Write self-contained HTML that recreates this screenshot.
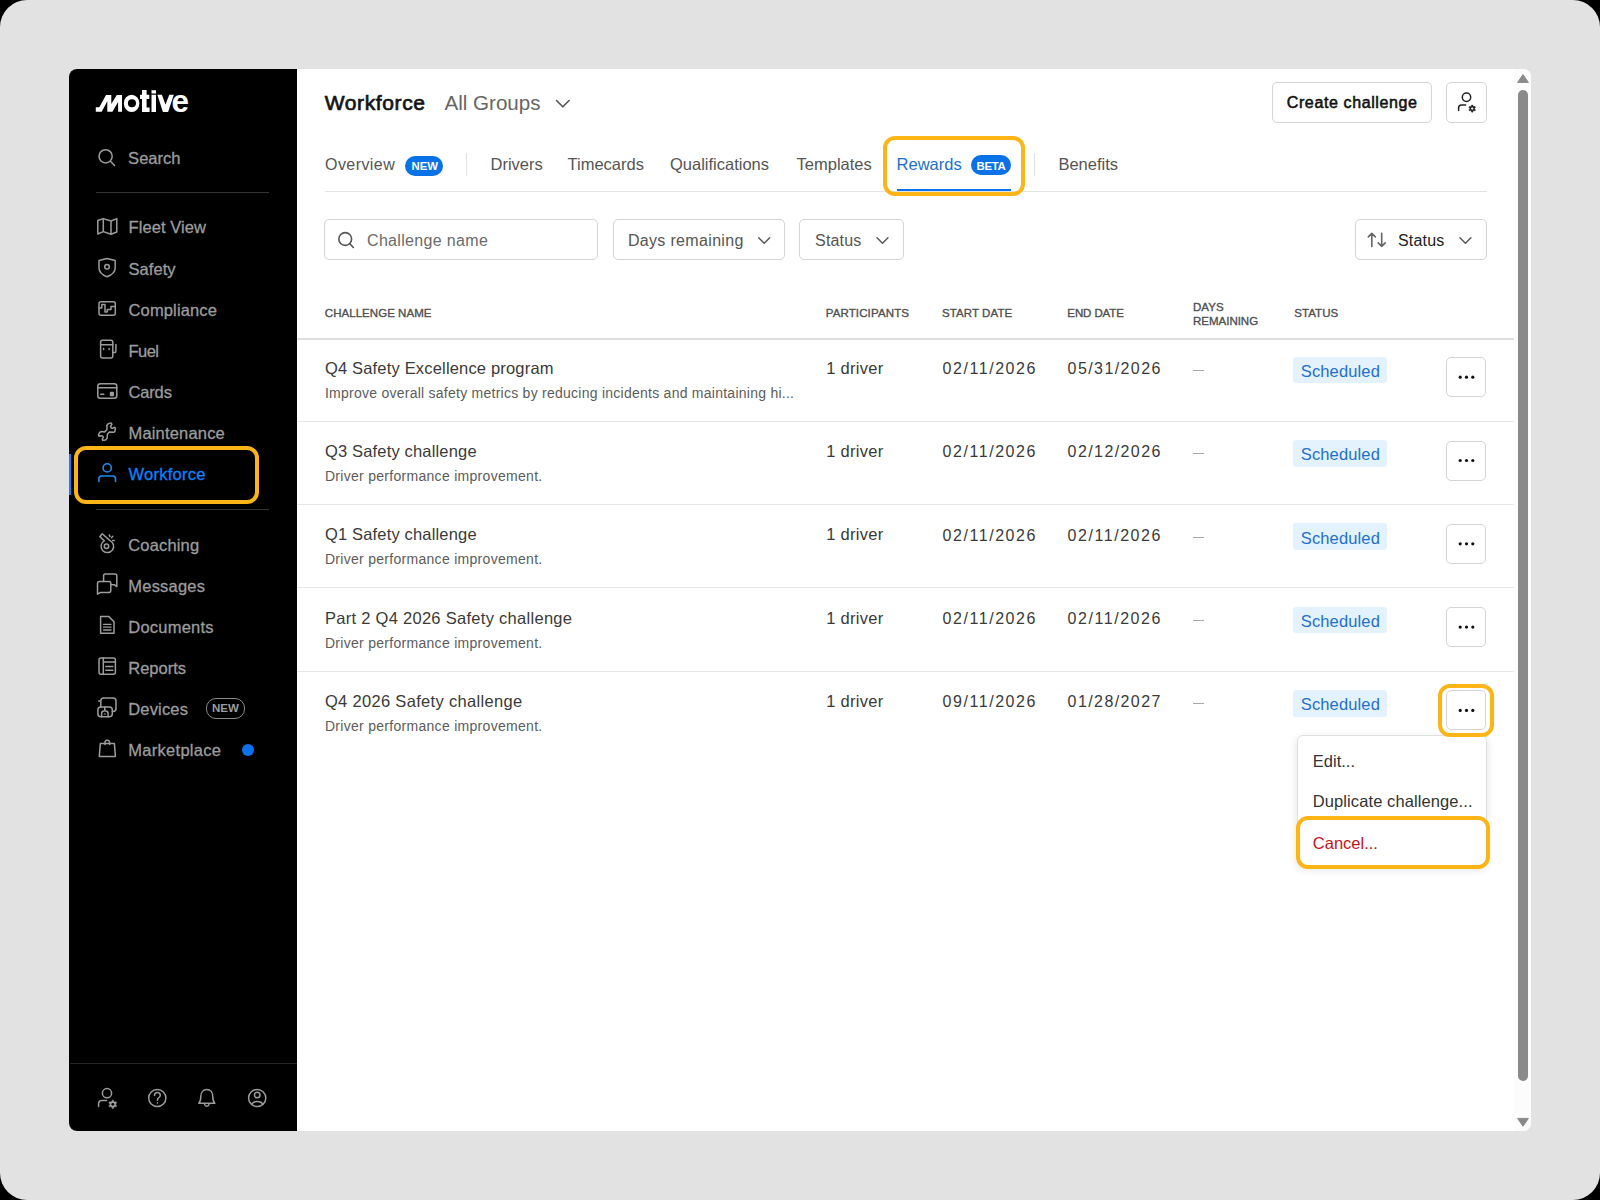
<!DOCTYPE html>
<html><head><meta charset="utf-8">
<style>
*{margin:0;padding:0;box-sizing:border-box}
html,body{width:1600px;height:1200px;overflow:hidden;background:#000;font-family:"Liberation Sans",sans-serif}
.a{position:absolute;white-space:nowrap;line-height:1}
.b{position:absolute}
.ic{position:absolute;overflow:visible}
</style></head><body>

<div class="b" style="left:0.00px;top:0.00px;width:1600.00px;height:1200.00px;background:#e2e2e2;border-radius:27px"></div>
<div class="b" style="left:69.00px;top:69.00px;width:1462.00px;height:1062.00px;background:#fff;border-radius:8px"></div>
<div class="b" style="left:69.00px;top:69.00px;width:228.00px;height:1062.00px;background:#000;border-radius:8px 0 0 8px"></div>
<div class="b" style="left:1514.00px;top:69.00px;width:17.00px;height:1062.00px;background:#fcfcfc;border-radius:0 8px 8px 0"></div>
<svg class="ic" style="left:0;top:0" width="1600" height="200" viewBox="0 0 1600 200"><path fill="#fff" d="M95.8 111.8 L95.8 107.3 L99.3 107.3 L106 95 L111.3 95 L111.3 104 L116.8 95 L122 95 L122 111.8 L118.1 111.8 L118.1 102 L112.4 111.8 L107.3 111.8 L107.3 101.2 L101.7 111.8 Z"/><path fill="#fff" fill-rule="evenodd" d="M131.6 94.8 A7.8 8.55 0 1 1 131.6 111.9 A7.8 8.55 0 1 1 131.6 94.8 Z M131.95 99.3 A4.05 3.95 0 1 0 131.95 107.2 A4.05 3.95 0 1 0 131.95 99.3 Z"/><path fill="#fff" d="M142 90 H146.6 V94.8 H149.3 V99 H146.6 V107.4 H149.6 V111.9 H142 V99 H140 V94.8 H142 Z"/><path fill="#fff" d="M151.5 94.8 H156 V111.9 H151.5 Z M151.5 90.2 H156 V93.5 H151.5 Z"/><path fill="#fff" d="M157.4 94.8 H161.9 L165.5 104.5 L169.3 94.8 H173.8 L168.1 111.9 H162.9 Z"/><text x="171.4" y="111.5" font-family="Liberation Sans" font-weight="700" font-size="31.5" fill="#fff">e</text></svg>
<svg class="ic" style="left:0px;top:0px" width="300" height="1200" viewBox="0 0 300 1200"><g fill="none" stroke="#9c9c9c" stroke-width="1.5" stroke-linecap="round" stroke-linejoin="round"><circle cx="105.6" cy="156.3" r="6.6"/><path d="M110.4 161.2 L114.6 165.5"/></g></svg>
<div class="a" style="left:128.10px;top:149.83px;font-size:16.5px;color:#9c9c9c;font-weight:400;letter-spacing:0.026px;-webkit-text-stroke:0.3px currentColor;">Search</div>
<div class="b" style="left:96.00px;top:192.00px;width:173.00px;height:1.00px;background:#333"></div>
<div class="a" style="left:128.50px;top:219.43px;font-size:16.5px;color:#9c9c9c;font-weight:400;letter-spacing:0.070px;-webkit-text-stroke:0.3px currentColor;">Fleet View</div>
<div class="a" style="left:128.50px;top:260.53px;font-size:16.5px;color:#9c9c9c;font-weight:400;letter-spacing:0.064px;-webkit-text-stroke:0.3px currentColor;">Safety</div>
<div class="a" style="left:128.50px;top:301.63px;font-size:16.5px;color:#9c9c9c;font-weight:400;letter-spacing:0.142px;-webkit-text-stroke:0.3px currentColor;">Compliance</div>
<div class="a" style="left:128.50px;top:342.73px;font-size:16.5px;color:#9c9c9c;font-weight:400;letter-spacing:-0.531px;-webkit-text-stroke:0.3px currentColor;">Fuel</div>
<div class="a" style="left:128.50px;top:383.83px;font-size:16.5px;color:#9c9c9c;font-weight:400;letter-spacing:-0.155px;-webkit-text-stroke:0.3px currentColor;">Cards</div>
<div class="a" style="left:128.50px;top:424.93px;font-size:16.5px;color:#9c9c9c;font-weight:400;letter-spacing:0.177px;-webkit-text-stroke:0.3px currentColor;">Maintenance</div>
<div class="a" style="left:128.50px;top:466.03px;font-size:16.5px;color:#0a84ff;font-weight:400;letter-spacing:0.265px;-webkit-text-stroke:0.3px currentColor;">Workforce</div>
<div class="a" style="left:128.30px;top:537.33px;font-size:16.5px;color:#9c9c9c;font-weight:400;letter-spacing:0.155px;-webkit-text-stroke:0.3px currentColor;">Coaching</div>
<div class="a" style="left:128.30px;top:578.33px;font-size:16.5px;color:#9c9c9c;font-weight:400;letter-spacing:0.213px;-webkit-text-stroke:0.3px currentColor;">Messages</div>
<div class="a" style="left:128.30px;top:619.33px;font-size:16.5px;color:#9c9c9c;font-weight:400;letter-spacing:0.218px;-webkit-text-stroke:0.3px currentColor;">Documents</div>
<div class="a" style="left:128.30px;top:660.33px;font-size:16.5px;color:#9c9c9c;font-weight:400;letter-spacing:-0.011px;-webkit-text-stroke:0.3px currentColor;">Reports</div>
<div class="a" style="left:128.30px;top:701.33px;font-size:16.5px;color:#9c9c9c;font-weight:400;letter-spacing:0.152px;-webkit-text-stroke:0.3px currentColor;">Devices</div>
<div class="a" style="left:128.30px;top:742.33px;font-size:16.5px;color:#9c9c9c;font-weight:400;letter-spacing:0.282px;-webkit-text-stroke:0.3px currentColor;">Marketplace</div>
<div class="b" style="left:96.00px;top:509.00px;width:173.00px;height:1.00px;background:#333"></div>
<div class="b" style="left:70.00px;top:1062.60px;width:227.00px;height:1.40px;background:#262626"></div>
<svg class="ic" style="left:0px;top:0px" width="300" height="1200" viewBox="0 0 300 1200"><g fill="none" stroke="#9c9c9c" stroke-width="1.5" stroke-linecap="round" stroke-linejoin="round"><path d="M97.8 220.5 L103.3 218.6 L111 221 L116.8 218.6 L116.8 232 L111 234.2 L103.3 231.6 L97.8 234 Z M103.3 218.6 V231.6 M111 221 V234.2"/><path d="M99 260.5 L107 258.6 L115.2 260.5 L115.2 268 C115.2 272 111.5 275 107 276.8 C102.5 275 99 272 99 268 Z"/><circle cx="107" cy="266.8" r="2.3"/><rect x="99" y="301.8" width="16.3" height="13.4" rx="2"/><path d="M99 308 H101.8 V304.6 H105 V312 H107.2 V309.5 H111 V306.5 H115.2"/><rect x="100.6" y="340.3" width="12.2" height="17.7" rx="2"/><path d="M100.6 344.8 H112.8 M112.8 352.5 L114.8 352.5 C115.6 352.5 115.9 351.5 115.9 350.5 V344.6"/><path d="M103.6 348.4 V349.4 M109.1 348.4 V349.4"/><rect x="97.8" y="383.8" width="19" height="14.4" rx="2.5"/><path d="M97.8 387.8 H116.8 M100.8 394.2 H103.8"/><rect x="110.6" y="392.6" width="2.6" height="3" fill="#9c9c9c"/><path d="M106.7 425.6 L108.5 423.6 L111 422.9 L111.9 424.2 L110.6 426.3 L111.1 428 L112.9 428.2 L114.4 427.3 L115.5 428.2 L114.8 431.5 L113.8 432.3 L109.4 431.9 L107.5 434 L107.1 438.2 L105.6 440.1 L102.7 440.3 L102.3 438.8 L103.3 437.3 L102.3 435.9 L100.2 435.7 L98.9 436.3 L98.5 434.6 L99.8 432.3 L101.75 431.5 L104.6 431.9 L106.7 430 L107.1 427.3 Z"/></g></svg>
<svg class="ic" style="left:0px;top:0px" width="300" height="1200" viewBox="0 0 300 1200"><g fill="none" stroke="#1a8cf5" stroke-width="1.6" stroke-linecap="round"><circle cx="107.2" cy="467.9" r="4.1"/><path d="M98.9 481.6 V478.8 C98.9 477.2 100 476 101.6 476 H112.8 C114.4 476 115.5 477.2 115.5 478.8 V481.6"/></g></svg>
<div class="b" style="left:69.00px;top:453.70px;width:2.00px;height:41.10px;background:#0a84ff"></div>
<svg class="ic" style="left:0px;top:0px" width="300" height="1200" viewBox="0 0 300 1200"><g fill="none" stroke="#9c9c9c" stroke-width="1.5" stroke-linecap="round" stroke-linejoin="round"><path d="M104.3 540.8 L99.9 536.6 L102.2 533.8 L110 540.6 A6.3 6.3 0 1 1 104.3 540.8 Z"/><circle cx="106.5" cy="546.2" r="2.2"/><path d="M109.4 535 L109.9 536.6 M112.8 536.3 L111.6 537.6 M114.2 540.5 L112.6 540.4"/><path d="M103.6 581.6 V575.8 C103.6 574.8 104.4 574 105.4 574 H115 C116 574 116.8 574.8 116.8 575.8 V586.6 L114.6 584.8 H111"/><path d="M99 581.6 H109 C110 581.6 110.8 582.4 110.8 583.4 V590.6 C110.8 591.6 110 592.4 109 592.4 H100.6 L97.5 594.2 V583.4 C97.5 582.4 98.3 581.6 99.3 581.6 Z"/><path d="M100.6 616.6 H108.9 L114 621.8 V633.2 H100.6 Z"/><path d="M103.5 624.3 H111 M103.5 627.2 H111 M103.5 630 H111" stroke-width="1.3"/><rect x="99" y="658" width="16.4" height="16.3" rx="2"/><path d="M103.3 658 V674.3 M103.3 662 H115.4 M105.8 666.4 H112.8 M105.8 670.3 H112.8"/><path d="M100.8 706.9 V701 C100.8 699.3 102.1 698.1 103.8 698.1 H113 C114.7 698.1 116 699.3 116 701 V708.5 C116 710.2 114.7 711.5 113 711.5 H112.3 M98.6 701 H100.8"/><rect x="97.9" y="706.9" width="14.4" height="9.8" rx="3"/><path d="M101.6 716.7 V713.6 C101.6 712 102.6 711 104 711 L104.8 710.2 L105.6 711 C107 711 108.1 712 108.1 713.6 V716.7 M104.8 706.9 V710.2"/><path d="M104.2 714 H105.4" stroke-width="1"/><path d="M100.3 743.6 H114.4 L115.4 756.4 H99.3 Z"/><path d="M105 744.6 V742.4 C105 741 106 740.2 107.3 740.2 C108.6 740.2 109.6 741 109.6 742.4 V744.6"/></g></svg>
<div class="b" style="left:205.90px;top:698.40px;width:38.80px;height:20.30px;border:1.3px solid #8a8a8a;border-radius:10px"></div>
<div class="a" style="left:212.00px;top:702.77px;font-size:11.5px;color:#9c9c9c;font-weight:700;">NEW</div>
<div class="b" style="left:242.00px;top:744.00px;width:12.00px;height:12.00px;background:#0b72ee;border-radius:50%"></div>
<svg class="ic" style="left:0px;top:0px" width="300" height="1200" viewBox="0 0 300 1200"><g fill="none" stroke="#9c9c9c" stroke-width="1.5" stroke-linecap="round" stroke-linejoin="round"><circle cx="107" cy="1093.2" r="4.6"/><path d="M98.6 1106.4 V1103.6 C98.6 1101.8 99.9 1100.5 101.7 1100.5 H106.5"/><circle cx="157.3" cy="1098" r="8.6"/><path d="M154.5 1095.6 C154.5 1093.8 155.8 1092.6 157.4 1092.6 C159.1 1092.6 160.3 1093.8 160.3 1095.4 C160.3 1097.4 157.4 1097.8 157.4 1100.2"/><path d="M157.4 1102.7 V1103.1"/><path d="M198.8 1103.3 C200.8 1101.3 200.8 1099.5 200.8 1096.5 C200.8 1092.3 203.3 1089.5 206.8 1089.5 C210.3 1089.5 212.8 1092.3 212.8 1096.5 C212.8 1099.5 212.8 1101.3 214.8 1103.3 Z"/><path d="M204.6 1104.4 C204.9 1105.6 205.7 1106.2 206.8 1106.2 C207.9 1106.2 208.7 1105.6 209 1104.4"/><circle cx="257.2" cy="1098" r="8.6"/><circle cx="257.2" cy="1095" r="2.8"/><path d="M251.6 1104.6 C252.3 1102.8 254.5 1101.6 257.2 1101.6 C259.9 1101.6 262.1 1102.8 262.8 1104.6"/></g></svg>
<svg class="ic" style="left:0px;top:0px" width="300" height="1200" viewBox="0 0 300 1200"><polygon points="112.25,1100.14 113.35,1100.14 113.95,1101.53 114.63,1101.92 116.13,1101.74 116.68,1102.69 115.77,1103.91 115.77,1104.69 116.68,1105.91 116.13,1106.86 114.63,1106.68 113.95,1107.07 113.35,1108.46 112.25,1108.46 111.65,1107.07 110.97,1106.68 109.47,1106.86 108.92,1105.91 109.83,1104.69 109.83,1103.91 108.92,1102.69 109.47,1101.74 110.97,1101.92 111.65,1101.53" fill="#9c9c9c" stroke="#9c9c9c" stroke-width="0.5" stroke-linejoin="round"/><circle cx="112.8" cy="1104.3" r="1.35" fill="#000"/></svg>
<div class="b" style="left:74.20px;top:446.20px;width:185.00px;height:57.60px;border:4.2px solid #fcb416;border-radius:12px"></div>
<div class="a" style="left:324.65px;top:92.42px;font-size:21px;color:#141414;font-weight:400;letter-spacing:0.632px;-webkit-text-stroke:0.7px currentColor;">Workforce</div>
<div class="a" style="left:444.40px;top:93.46px;font-size:20.6px;color:#666;font-weight:400;letter-spacing:0.004px;">All Groups</div>
<svg class="ic" style="left:0px;top:0px" width="1600" height="300" viewBox="0 0 1600 300"><path d="M556.5 100.5 L562.8 106.8 L569.1 100.5" fill="none" stroke="#555" stroke-width="1.6" stroke-linecap="round" stroke-linejoin="round"/></svg>
<div class="b" style="left:1272.20px;top:82.30px;width:159.40px;height:40.80px;border:1px solid #d4d4d4;border-radius:5px;background:#fff"></div>
<div class="a" style="left:1286.75px;top:94.96px;font-size:16px;color:#111;font-weight:400;letter-spacing:0.618px;-webkit-text-stroke:0.55px currentColor;">Create challenge</div>
<div class="b" style="left:1446.00px;top:82.30px;width:41.00px;height:40.80px;border:1px solid #d4d4d4;border-radius:5px;background:#fff"></div>
<svg class="ic" style="left:0px;top:0px" width="1600" height="300" viewBox="0 0 1600 300"><g fill="none" stroke="#222" stroke-width="1.5" stroke-linecap="round"><circle cx="1466.5" cy="97.2" r="4.2"/><path d="M1458.6 110.5 V107.8 C1458.6 106.2 1459.8 105 1461.4 105 H1465.6"/></g><polygon points="1471.73,105.03 1472.67,105.03 1473.16,106.29 1473.72,106.62 1475.06,106.41 1475.53,107.22 1474.68,108.27 1474.68,108.93 1475.53,109.98 1475.06,110.79 1473.72,110.58 1473.16,110.91 1472.67,112.17 1471.73,112.17 1471.24,110.91 1470.68,110.58 1469.34,110.79 1468.87,109.98 1469.72,108.93 1469.72,108.27 1468.87,107.22 1469.34,106.41 1470.68,106.62 1471.24,106.29" fill="#222" stroke="#222" stroke-width="0.5" stroke-linejoin="round"/><circle cx="1472.2" cy="108.6" r="1.12" fill="#fff"/></svg>
<div class="a" style="left:325.00px;top:156.86px;font-size:16px;color:#555;font-weight:400;letter-spacing:0.440px;">Overview</div>
<div class="b" style="left:405.00px;top:155.50px;width:38.00px;height:20.00px;background:#0a72e6;border-radius:10px"></div>
<div class="a" style="left:411.50px;top:160.65px;font-size:11.4px;color:#fff;font-weight:700;letter-spacing:-0.048px;">NEW</div>
<div class="b" style="left:466.00px;top:153.00px;width:1.00px;height:23.00px;background:#e2e2e2"></div>
<div class="a" style="left:490.50px;top:156.03px;font-size:16.5px;color:#555;font-weight:400;">Drivers</div>
<div class="a" style="left:567.50px;top:156.03px;font-size:16.5px;color:#555;font-weight:400;">Timecards</div>
<div class="a" style="left:670.00px;top:156.03px;font-size:16.5px;color:#555;font-weight:400;">Qualifications</div>
<div class="a" style="left:796.60px;top:156.03px;font-size:16.5px;color:#555;font-weight:400;">Templates</div>
<div class="a" style="left:896.60px;top:156.03px;font-size:16.5px;color:#1a6fd6;font-weight:400;">Rewards</div>
<div class="b" style="left:971.00px;top:155.30px;width:40.00px;height:20.00px;background:#0a72e6;border-radius:10px"></div>
<div class="a" style="left:976.60px;top:160.95px;font-size:11.4px;color:#fff;font-weight:700;letter-spacing:-0.362px;">BETA</div>
<div class="b" style="left:1034.00px;top:153.00px;width:1.00px;height:23.00px;background:#e2e2e2"></div>
<div class="a" style="left:1058.40px;top:156.03px;font-size:16.5px;color:#555;font-weight:400;">Benefits</div>
<div class="b" style="left:325.00px;top:191.00px;width:1162.00px;height:1.00px;background:#e3e3e3"></div>
<div class="b" style="left:896.60px;top:188.90px;width:114.60px;height:2.10px;background:#0a72e6"></div>
<div class="b" style="left:882.50px;top:136.00px;width:142.20px;height:60.00px;border:4.2px solid #fcb416;border-radius:12px"></div>
<div class="b" style="left:324.40px;top:219.40px;width:274.00px;height:41.10px;border:1px solid #d4d4d4;border-radius:5px"></div>
<svg class="ic" style="left:0px;top:0px" width="1600" height="300" viewBox="0 0 1600 300"><g fill="none" stroke="#555" stroke-width="1.6" stroke-linecap="round"><circle cx="345.2" cy="239" r="6.4"/><path d="M349.8 243.8 L353.4 247.5"/></g></svg>
<div class="a" style="left:367.00px;top:232.86px;font-size:16px;color:#6b6b6b;font-weight:400;letter-spacing:0.329px;">Challenge name</div>
<div class="b" style="left:612.80px;top:219.40px;width:172.20px;height:41.10px;border:1px solid #d4d4d4;border-radius:5px"></div>
<div class="a" style="left:627.90px;top:232.96px;font-size:16px;color:#555;font-weight:400;letter-spacing:0.334px;">Days remaining</div>
<div class="b" style="left:799.20px;top:219.40px;width:104.70px;height:41.10px;border:1px solid #d4d4d4;border-radius:5px"></div>
<div class="a" style="left:815.10px;top:232.96px;font-size:16px;color:#555;font-weight:400;letter-spacing:0.148px;">Status</div>
<div class="b" style="left:1355.00px;top:219.40px;width:132.00px;height:41.10px;border:1px solid #d4d4d4;border-radius:5px"></div>
<div class="a" style="left:1398.00px;top:232.76px;font-size:16px;color:#222;font-weight:400;letter-spacing:0.188px;">Status</div>
<svg class="ic" style="left:0px;top:0px" width="1600" height="300" viewBox="0 0 1600 300"><path d="M758.7 237.7 L764.2 243.2 L769.7 237.7" fill="none" stroke="#555" stroke-width="1.4" stroke-linecap="round" stroke-linejoin="round"/><path d="M877.0 237.7 L882.5 243.2 L888.0 237.7" fill="none" stroke="#555" stroke-width="1.4" stroke-linecap="round" stroke-linejoin="round"/><path d="M1459.9 237.7 L1465.4 243.2 L1470.9 237.7" fill="none" stroke="#555" stroke-width="1.4" stroke-linecap="round" stroke-linejoin="round"/><g fill="none" stroke="#666" stroke-width="1.6" stroke-linecap="round" stroke-linejoin="round"><path d="M1371.8 246.4 V233.4 M1368.3 236.9 L1371.8 233.4 L1375.3 236.9 M1381.7 233.4 V246.4 M1378.2 242.9 L1381.7 246.4 L1385.2 242.9"/></g></svg>
<div class="a" style="left:324.80px;top:307.67px;font-size:11.5px;color:#505050;font-weight:400;letter-spacing:0.047px;-webkit-text-stroke:0.35px currentColor;">CHALLENGE NAME</div>
<div class="a" style="left:825.70px;top:307.67px;font-size:11.5px;color:#505050;font-weight:400;letter-spacing:0.137px;-webkit-text-stroke:0.35px currentColor;">PARTICIPANTS</div>
<div class="a" style="left:941.90px;top:307.67px;font-size:11.5px;color:#505050;font-weight:400;letter-spacing:0.096px;-webkit-text-stroke:0.35px currentColor;">START DATE</div>
<div class="a" style="left:1067.35px;top:307.67px;font-size:11.5px;color:#505050;font-weight:400;letter-spacing:-0.106px;-webkit-text-stroke:0.35px currentColor;">END DATE</div>
<div class="a" style="left:1193.00px;top:302.07px;font-size:11.5px;color:#505050;font-weight:400;letter-spacing:0.045px;-webkit-text-stroke:0.35px currentColor;">DAYS</div>
<div class="a" style="left:1193.00px;top:315.57px;font-size:11.5px;color:#505050;font-weight:400;letter-spacing:-0.009px;-webkit-text-stroke:0.35px currentColor;">REMAINING</div>
<div class="a" style="left:1294.20px;top:307.67px;font-size:11.5px;color:#505050;font-weight:400;letter-spacing:0.089px;-webkit-text-stroke:0.35px currentColor;">STATUS</div>
<div class="b" style="left:297.00px;top:338.00px;width:1217.00px;height:2.00px;background:#dedede"></div>
<div class="a" style="left:324.90px;top:359.83px;font-size:16.5px;color:#3a3a3a;font-weight:400;letter-spacing:0.179px;">Q4 Safety Excellence program</div>
<div class="a" style="left:324.90px;top:385.75px;font-size:14px;color:#5c5c5c;font-weight:400;letter-spacing:0.254px;">Improve overall safety metrics by reducing incidents and maintaining hi...</div>
<div class="a" style="left:826.25px;top:359.83px;font-size:16.5px;color:#3a3a3a;font-weight:400;letter-spacing:0.282px;">1 driver</div>
<div class="a" style="left:942.60px;top:361.16px;font-size:16px;color:#3a3a3a;font-weight:400;letter-spacing:1.545px;">02/11/2026</div>
<div class="a" style="left:1067.60px;top:361.16px;font-size:16px;color:#3a3a3a;font-weight:400;letter-spacing:1.413px;">05/31/2026</div>
<div class="b" style="left:1192.50px;top:370.00px;width:11.25px;height:1.25px;background:#a8a8a8"></div>
<div class="b" style="left:1293.10px;top:356.80px;width:93.60px;height:26.70px;background:#e4f2fe;border-radius:3px"></div>
<div class="a" style="left:1300.75px;top:362.93px;font-size:16.5px;color:#1f6fd1;font-weight:400;letter-spacing:0.134px;">Scheduled</div>
<div class="b" style="left:1446.40px;top:357.20px;width:40.10px;height:40.05px;border:1px solid #d4d4d4;border-radius:5px;background:#fff"></div>
<svg class="ic" style="left:0px;top:0px" width="1600" height="1200" viewBox="0 0 1600 1200"><g fill="#111"><circle cx="1460.2" cy="377.2" r="1.6"/><circle cx="1466.5" cy="377.2" r="1.6"/><circle cx="1472.8" cy="377.2" r="1.6"/></g></svg>
<div class="b" style="left:297.00px;top:420.60px;width:1217.00px;height:1.20px;background:#e6e6e6"></div>
<div class="a" style="left:324.90px;top:443.13px;font-size:16.5px;color:#3a3a3a;font-weight:400;letter-spacing:0.172px;">Q3 Safety challenge</div>
<div class="a" style="left:324.90px;top:469.05px;font-size:14px;color:#5c5c5c;font-weight:400;letter-spacing:0.294px;">Driver performance improvement.</div>
<div class="a" style="left:826.25px;top:443.13px;font-size:16.5px;color:#3a3a3a;font-weight:400;letter-spacing:0.282px;">1 driver</div>
<div class="a" style="left:942.60px;top:444.46px;font-size:16px;color:#3a3a3a;font-weight:400;letter-spacing:1.545px;">02/11/2026</div>
<div class="a" style="left:1067.60px;top:444.46px;font-size:16px;color:#3a3a3a;font-weight:400;letter-spacing:1.413px;">02/12/2026</div>
<div class="b" style="left:1192.50px;top:453.00px;width:11.25px;height:1.25px;background:#a8a8a8"></div>
<div class="b" style="left:1293.10px;top:440.10px;width:93.60px;height:26.70px;background:#e4f2fe;border-radius:3px"></div>
<div class="a" style="left:1300.75px;top:446.23px;font-size:16.5px;color:#1f6fd1;font-weight:400;letter-spacing:0.134px;">Scheduled</div>
<div class="b" style="left:1446.40px;top:440.50px;width:40.10px;height:40.05px;border:1px solid #d4d4d4;border-radius:5px;background:#fff"></div>
<svg class="ic" style="left:0px;top:0px" width="1600" height="1200" viewBox="0 0 1600 1200"><g fill="#111"><circle cx="1460.2" cy="460.5" r="1.6"/><circle cx="1466.5" cy="460.5" r="1.6"/><circle cx="1472.8" cy="460.5" r="1.6"/></g></svg>
<div class="b" style="left:297.00px;top:503.90px;width:1217.00px;height:1.20px;background:#e6e6e6"></div>
<div class="a" style="left:324.90px;top:526.43px;font-size:16.5px;color:#3a3a3a;font-weight:400;letter-spacing:0.172px;">Q1 Safety challenge</div>
<div class="a" style="left:324.90px;top:552.35px;font-size:14px;color:#5c5c5c;font-weight:400;letter-spacing:0.294px;">Driver performance improvement.</div>
<div class="a" style="left:826.25px;top:526.43px;font-size:16.5px;color:#3a3a3a;font-weight:400;letter-spacing:0.282px;">1 driver</div>
<div class="a" style="left:942.60px;top:527.76px;font-size:16px;color:#3a3a3a;font-weight:400;letter-spacing:1.545px;">02/11/2026</div>
<div class="a" style="left:1067.60px;top:527.76px;font-size:16px;color:#3a3a3a;font-weight:400;letter-spacing:1.545px;">02/11/2026</div>
<div class="b" style="left:1192.50px;top:537.00px;width:11.25px;height:1.25px;background:#a8a8a8"></div>
<div class="b" style="left:1293.10px;top:523.40px;width:93.60px;height:26.70px;background:#e4f2fe;border-radius:3px"></div>
<div class="a" style="left:1300.75px;top:529.53px;font-size:16.5px;color:#1f6fd1;font-weight:400;letter-spacing:0.134px;">Scheduled</div>
<div class="b" style="left:1446.40px;top:523.80px;width:40.10px;height:40.05px;border:1px solid #d4d4d4;border-radius:5px;background:#fff"></div>
<svg class="ic" style="left:0px;top:0px" width="1600" height="1200" viewBox="0 0 1600 1200"><g fill="#111"><circle cx="1460.2" cy="543.8" r="1.6"/><circle cx="1466.5" cy="543.8" r="1.6"/><circle cx="1472.8" cy="543.8" r="1.6"/></g></svg>
<div class="b" style="left:297.00px;top:587.20px;width:1217.00px;height:1.20px;background:#e6e6e6"></div>
<div class="a" style="left:324.90px;top:609.73px;font-size:16.5px;color:#3a3a3a;font-weight:400;letter-spacing:0.287px;">Part 2 Q4 2026 Safety challenge</div>
<div class="a" style="left:324.90px;top:635.65px;font-size:14px;color:#5c5c5c;font-weight:400;letter-spacing:0.294px;">Driver performance improvement.</div>
<div class="a" style="left:826.25px;top:609.73px;font-size:16.5px;color:#3a3a3a;font-weight:400;letter-spacing:0.282px;">1 driver</div>
<div class="a" style="left:942.60px;top:611.06px;font-size:16px;color:#3a3a3a;font-weight:400;letter-spacing:1.545px;">02/11/2026</div>
<div class="a" style="left:1067.60px;top:611.06px;font-size:16px;color:#3a3a3a;font-weight:400;letter-spacing:1.545px;">02/11/2026</div>
<div class="b" style="left:1192.50px;top:620.00px;width:11.25px;height:1.25px;background:#a8a8a8"></div>
<div class="b" style="left:1293.10px;top:606.70px;width:93.60px;height:26.70px;background:#e4f2fe;border-radius:3px"></div>
<div class="a" style="left:1300.75px;top:612.83px;font-size:16.5px;color:#1f6fd1;font-weight:400;letter-spacing:0.134px;">Scheduled</div>
<div class="b" style="left:1446.40px;top:607.10px;width:40.10px;height:40.05px;border:1px solid #d4d4d4;border-radius:5px;background:#fff"></div>
<svg class="ic" style="left:0px;top:0px" width="1600" height="1200" viewBox="0 0 1600 1200"><g fill="#111"><circle cx="1460.2" cy="627.0999999999999" r="1.6"/><circle cx="1466.5" cy="627.0999999999999" r="1.6"/><circle cx="1472.8" cy="627.0999999999999" r="1.6"/></g></svg>
<div class="b" style="left:297.00px;top:670.50px;width:1217.00px;height:1.20px;background:#e6e6e6"></div>
<div class="a" style="left:324.90px;top:693.03px;font-size:16.5px;color:#3a3a3a;font-weight:400;letter-spacing:0.318px;">Q4 2026 Safety challenge</div>
<div class="a" style="left:324.90px;top:718.95px;font-size:14px;color:#5c5c5c;font-weight:400;letter-spacing:0.294px;">Driver performance improvement.</div>
<div class="a" style="left:826.25px;top:693.03px;font-size:16.5px;color:#3a3a3a;font-weight:400;letter-spacing:0.282px;">1 driver</div>
<div class="a" style="left:942.60px;top:694.36px;font-size:16px;color:#3a3a3a;font-weight:400;letter-spacing:1.545px;">09/11/2026</div>
<div class="a" style="left:1067.60px;top:694.36px;font-size:16px;color:#3a3a3a;font-weight:400;letter-spacing:1.413px;">01/28/2027</div>
<div class="b" style="left:1192.50px;top:703.00px;width:11.25px;height:1.25px;background:#a8a8a8"></div>
<div class="b" style="left:1293.10px;top:690.00px;width:93.60px;height:26.70px;background:#e4f2fe;border-radius:3px"></div>
<div class="a" style="left:1300.75px;top:696.13px;font-size:16.5px;color:#1f6fd1;font-weight:400;letter-spacing:0.134px;">Scheduled</div>
<div class="b" style="left:1446.40px;top:690.40px;width:40.10px;height:40.05px;border:1px solid #d4d4d4;border-radius:5px;background:#fff"></div>
<svg class="ic" style="left:0px;top:0px" width="1600" height="1200" viewBox="0 0 1600 1200"><g fill="#111"><circle cx="1460.2" cy="710.4" r="1.6"/><circle cx="1466.5" cy="710.4" r="1.6"/><circle cx="1472.8" cy="710.4" r="1.6"/></g></svg>
<div class="b" style="left:1297.00px;top:735.30px;width:190.20px;height:130.70px;background:#fff;border:1px solid #e0e0e0;border-radius:6px;box-shadow:0 3px 10px rgba(0,0,0,0.12)"></div>
<div class="a" style="left:1312.80px;top:752.83px;font-size:16.5px;color:#333;font-weight:400;">Edit...</div>
<div class="a" style="left:1312.80px;top:793.33px;font-size:16.5px;color:#333;font-weight:400;letter-spacing:0.092px;">Duplicate challenge...</div>
<div class="a" style="left:1312.80px;top:834.93px;font-size:16.5px;color:#c4141c;font-weight:400;">Cancel...</div>
<div class="b" style="left:1295.90px;top:815.80px;width:194.10px;height:53.30px;border:4.2px solid #fcb416;border-radius:12px"></div>
<div class="b" style="left:1438.30px;top:684.00px;width:56.10px;height:52.80px;border:4.2px solid #fcb416;border-radius:12px"></div>
<svg class="ic" style="left:0px;top:0px" width="1600" height="1200" viewBox="0 0 1600 1200"><path d="M1523 74.6 L1528.4 82.4 H1517.6 Z" fill="#8a8a8a" stroke="#8a8a8a" stroke-width="1" stroke-linejoin="round"/><path d="M1523 1126.2 L1528.4 1118.4 H1517.6 Z" fill="#8a8a8a" stroke="#8a8a8a" stroke-width="1" stroke-linejoin="round"/></svg>
<div class="b" style="left:1518.00px;top:90.00px;width:10.00px;height:990.50px;background:#8a8a8a;border-radius:5px"></div>
</body></html>
